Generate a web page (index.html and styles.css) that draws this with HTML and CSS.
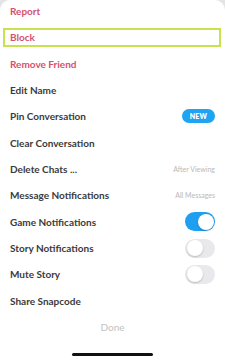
FILE: index.html
```html
<!DOCTYPE html>
<html>
<head>
<meta charset="utf-8">
<link rel="stylesheet" href="styles.css">
</head>
<body>
<div class="sheet">
  <ul class="menu">
    <li class="row danger">Report</li>
    <li class="row row-focus"><span class="focus-box danger">Block</span></li>
    <li class="row danger">Remove Friend</li>
    <li class="row">Edit Name</li>
    <li class="row">Pin Conversation<span class="badge">NEW</span></li>
    <li class="row">Clear Conversation</li>
    <li class="row">Delete Chats ...<span class="value">After Viewing</span></li>
    <li class="row">Message Notifications<span class="value">All Messages</span></li>
    <li class="row">Game Notifications<span class="toggle on"><span class="knob"></span></span></li>
    <li class="row">Story Notifications<span class="toggle"><span class="knob"></span></span></li>
    <li class="row">Mute Story<span class="toggle"><span class="knob"></span></span></li>
    <li class="row">Share Snapcode</li>
    <li class="row done">Done</li>
  </ul>
  <div class="home-bar"></div>
</div>
</body>
</html>
```

FILE: styles.css
```css
html, body {
  margin: 0;
  padding: 0;
}
body {
  background: #e4e4e4;
  width: 225px;
  height: 360px;
  overflow: hidden;
  font-family: "Lato", "Noto Sans", sans-serif;
}
.sheet {
  background: #ffffff;
  height: 360px;
  border-radius: 10px 10px 0 0;
  display: flex;
  flex-direction: column;
}
.menu {
  list-style: none;
  margin: -2px 0 0 0;
  padding: 0;
}
.row {
  height: 26.33px;
  display: flex;
  align-items: center;
  justify-content: space-between;
  padding: 0 10px;
  font-size: 10px;
  font-weight: 700;
  color: #3b3b3b;
  box-sizing: border-box;
}
.danger {
  color: #d6506d;
}
.row-focus {
  padding: 0 4px 0 3px;
}
.focus-box {
  flex: 1;
  height: 19px;
  border: 2px solid #c6e24f;
  box-sizing: border-box;
  display: flex;
  align-items: center;
  padding-left: 5px;
}
.badge {
  background: #1ea4f1;
  color: #fff;
  font-size: 7px;
  font-weight: 800;
  width: 33px;
  height: 14px;
  border-radius: 7px;
  display: flex;
  align-items: center;
  justify-content: center;
  letter-spacing: 0.2px;
}
.value {
  font-size: 7px;
  font-weight: 400;
  color: #b9b9b9;
}
.toggle {
  width: 30px;
  height: 19px;
  border-radius: 10px;
  background: #e9e9ed;
  position: relative;
  display: block;
}
.toggle .knob {
  position: absolute;
  top: 1.5px;
  left: 1.5px;
  width: 16px;
  height: 16px;
  border-radius: 50%;
  background: #fff;
  box-shadow: 0 1px 2px rgba(0,0,0,0.2);
}
.toggle.on {
  background: #1e9ff0;
}
.toggle.on .knob {
  left: 12.5px;
}
.done {
  justify-content: center;
  font-weight: 400;
  color: #c2c2c2;
}
.home-bar {
  width: 81px;
  height: 3px;
  border-radius: 2px;
  background: #111;
  margin: 13px auto 0;
}
```
